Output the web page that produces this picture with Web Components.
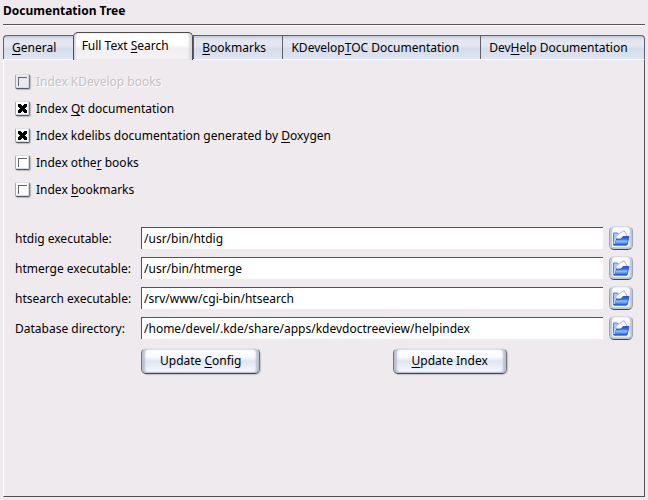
<!DOCTYPE html>
<html lang="en">
<head>
<meta charset="utf-8">
<title>Documentation Tree</title>
<style>
html, body { height: 100%; }
body { margin: 0; background: #eeeaee; color: #000; font: 12px/16px "Noto Sans", "Open Sans", sans-serif; }
</style>
</head>
<body>
<doc-settings></doc-settings>

<template id="settings-template">
<style>
:host { display: flex; flex-direction: column; box-sizing: border-box; min-height: 100%; padding: 3px; }
h1 { margin: 0; padding-bottom: 5px; border-bottom: 1px solid #5a565c; font-size: 12px; line-height: 16px; font-weight: 700; box-shadow: 0 1px #fff; }
nav { display: flex; align-items: flex-end; margin-top: 7px; }
main { flex: 1; box-sizing: border-box; border: 1px solid #535056; border-left-color: #fff; border-top-color: #fff; padding: 11px 11px 12px; }
.checks { display: grid; gap: 5px; }
.paths { display: grid; gap: 6px; margin-top: 25px; }
.actions { display: grid; grid-template-columns: auto 1fr auto 1fr; column-gap: 6px; margin: 8px 0 0 126px; }
.actions push-button:last-child { grid-column: 3; }
u { text-underline-offset: 2px; text-decoration-thickness: 1px; }
.wide { --grow: 3; }
.widest { --grow: 4; }
</style>
<h1>Documentation Tree</h1>
<nav role="tablist">
<tab-item><u>G</u>eneral</tab-item>
<tab-item class="widest" active>Full Text <u>S</u>earch</tab-item>
<tab-item><u>B</u>ookmarks</tab-item>
<tab-item class="wide">KDevelop<u>T</u>OC Documentation</tab-item>
<tab-item>Dev<u>H</u>elp Documentation</tab-item>
</nav>
<main>
<div class="checks">
<check-option disabled>Index KDevelop books</check-option>
<check-option checked>Index <u>Q</u>t documentation</check-option>
<check-option checked>Index kdelibs documentation generated by <u>D</u>oxygen</check-option>
<check-option>Index othe<u>r</u> books</check-option>
<check-option>Index <u>b</u>ookmarks</check-option>
</div>
<div class="paths">
<path-field value="/usr/bin/htdig">htdig executable:</path-field>
<path-field value="/usr/bin/htmerge">htmerge executable:</path-field>
<path-field value="/srv/www/cgi-bin/htsearch">htsearch executable:</path-field>
<path-field value="/home/devel/.kde/share/apps/kdevdoctreeview/helpindex">Database directory:</path-field>
</div>
<div class="actions">
<push-button>Update <u>C</u>onfig</push-button>
<push-button><u>U</u>pdate Index</push-button>
</div>
</main>
</template>

<template id="tab-template">
<style>
:host { display: block; flex: var(--grow, 1) 1 auto; }
button { display: block; box-sizing: border-box; width: 100%; height: 24px; margin: 0; padding: 0 14px 0 8px; border: 0 solid #5d6068; border-width: 1px 0 0 1px; background: linear-gradient(#bfc5d2, #dfe4ef 3px, #e4e8f2 9px, #d5dceb 13px, #dfe5f1); font: inherit; color: inherit; text-align: left; white-space: nowrap; }
:host(:first-child) button { border-top-left-radius: 4px; }
:host(:last-child) button { border-right-width: 1px; border-top-right-radius: 4px; }
:host([active]) { position: relative; margin-bottom: -1px; }
:host([active]) button { height: 28px; padding: 0 14px 2px 8px; border-width: 1px 1px 0; border-color: #4d4b50; border-radius: 5px 5px 0 0; background: linear-gradient(#fff, #fff 12px, #f1eff2 15px, #f4f2f5); box-shadow: inset 2px 0 1px #dcdade, inset -3px 0 2px #dcdade; }
</style>
<button type="button" role="tab"><slot></slot></button>
</template>

<template id="check-template">
<style>
:host { display: block; }
label { display: flex; align-items: flex-start; gap: 6px; height: 22px; padding-top: 3px; box-sizing: border-box; }
input { appearance: none; flex: none; box-sizing: border-box; width: 15px; height: 15px; margin: 0; border: 1px solid; border-color: #dcdee4 #777b84 #555963 #a3a8b2; border-radius: 2px; background: linear-gradient(#626267, #626267) 2px 2px / 9px 1px no-repeat, linear-gradient(#626267, #626267) 2px 2px / 1px 9px no-repeat, #fff; box-shadow: inset -1px -1px #d4d8e2, 1px 1px 1px #bbb8be; }
input:checked { background: url("data:image/svg+xml,%3Csvg xmlns='http://www.w3.org/2000/svg' width='13' height='13' shape-rendering='crispEdges'%3E%3Cpath fill='%23000' d='M2 2h3v1h1v1h1V3h1V2h3v3h-1v1H9v1h1v1h1v3H8v-1H7V9H6v1H5v1H2V8h1V7h1V6H3V5H2z'/%3E%3C/svg%3E") 0 0 no-repeat, #fff; }
input:disabled { background-color: #e9eaf3; }
input:disabled + span { color: #c5c1c6; text-shadow: 1px 1px #fff; }
</style>
<label><input type="checkbox"><span><slot></slot></span></label>
</template>

<template id="path-template">
<style>
:host { display: grid; grid-template-columns: 120px minmax(0, 1fr) 24px; column-gap: 6px; align-items: center; }
label { padding-top: 2px; white-space: nowrap; }
input { box-sizing: border-box; width: 100%; height: 22px; margin: 0; padding: 0 2px; border: 0 solid #535056; border-width: 1px 0 0 1px; border-radius: 0; background: #fff; font: inherit; color: inherit; outline: none; }
button { display: grid; place-items: center; box-sizing: border-box; width: 24px; height: 24px; margin: 0; padding: 0; border: 1px solid; border-color: #d6dae3 #a0a5b0 #3f444f #a0a5b0; border-radius: 5px; background: linear-gradient(#fff, #e6ebf6 55%, #f8faff); box-shadow: inset 2px 0 1px #c0c8d8, inset -2px 0 1px #c0c8d8, inset 0 -2px 1px #c0c8d8; }
svg { display: block; }
</style>
<label for="path"><slot></slot></label>
<input id="path" type="text">
<button type="button" aria-label="Browse">
<svg width="18" height="18" viewBox="0 0 18 18" aria-hidden="true">
<defs>
<linearGradient id="folder" x1="0" y1="0" x2="0" y2="1"><stop offset="0" stop-color="#1c50dc"/><stop offset=".3" stop-color="#2f6fe8"/><stop offset=".55" stop-color="#8cc4f8"/><stop offset="1" stop-color="#2a62e4"/></linearGradient>
<linearGradient id="back" x1="0" y1="0" x2="1" y2="0"><stop offset="0" stop-color="#9cc6fa"/><stop offset="1" stop-color="#dbe8ff"/></linearGradient>
</defs>
<path d="M1.500 4h4l1 2h8v10h-13z" fill="url(#back)" stroke="#5580e4" stroke-width="1"/>
<path d="M4 7l8-5.500 3 5.500-6 5H4z" fill="#fbfaff" stroke="#b4b4ee" stroke-width="1"/>
<path d="M4 10h5l2-2.500h6L15 16H2z" fill="url(#folder)" stroke="#1b45cf" stroke-width=".8"/>
<path d="M2 15l1.500-5" fill="none" stroke="#d8edff" stroke-width="1"/>
</svg>
</button>
</template>

<template id="button-template">
<style>
:host { display: block; }
button { display: block; box-sizing: border-box; height: 26px; margin: 0; padding: 0 18px 1px; border: 1px solid; border-color: #dce0e9 #70757f #424751 #70757f; border-radius: 5px; background: linear-gradient(#fff, #f9fbff 8px, #dfe5f3 12px, #f7f9ff); box-shadow: inset 3px 0 2px #b9c1d1, inset -3px 0 2px #b9c1d1, inset 0 -1px 1px #b9c1d1, 1px 1px 1px #c4c0c6; font: inherit; color: inherit; white-space: nowrap; }
</style>
<button type="button"><slot></slot></button>
</template>

<script>
class TemplateElement extends HTMLElement {
  constructor() {
    super();
    this.attachShadow({ mode: "open" });
    this.shadowRoot.append(document.getElementById(this.constructor.template).content.cloneNode(true));
  }
}
class TabItem extends TemplateElement {
  static template = "tab-template";
  connectedCallback() {
    this.shadowRoot.querySelector("button").setAttribute("aria-selected", this.hasAttribute("active"));
  }
}
class CheckOption extends TemplateElement {
  static template = "check-template";
  connectedCallback() {
    const box = this.shadowRoot.querySelector("input");
    box.checked = this.hasAttribute("checked");
    box.disabled = this.hasAttribute("disabled");
  }
}
class PathField extends TemplateElement {
  static template = "path-template";
  connectedCallback() {
    this.shadowRoot.querySelector("input").value = this.getAttribute("value");
  }
}
class PushButton extends TemplateElement {
  static template = "button-template";
}
class DocSettings extends TemplateElement {
  static template = "settings-template";
}
customElements.define("tab-item", TabItem);
customElements.define("check-option", CheckOption);
customElements.define("path-field", PathField);
customElements.define("push-button", PushButton);
customElements.define("doc-settings", DocSettings);
</script>
</body>
</html>
